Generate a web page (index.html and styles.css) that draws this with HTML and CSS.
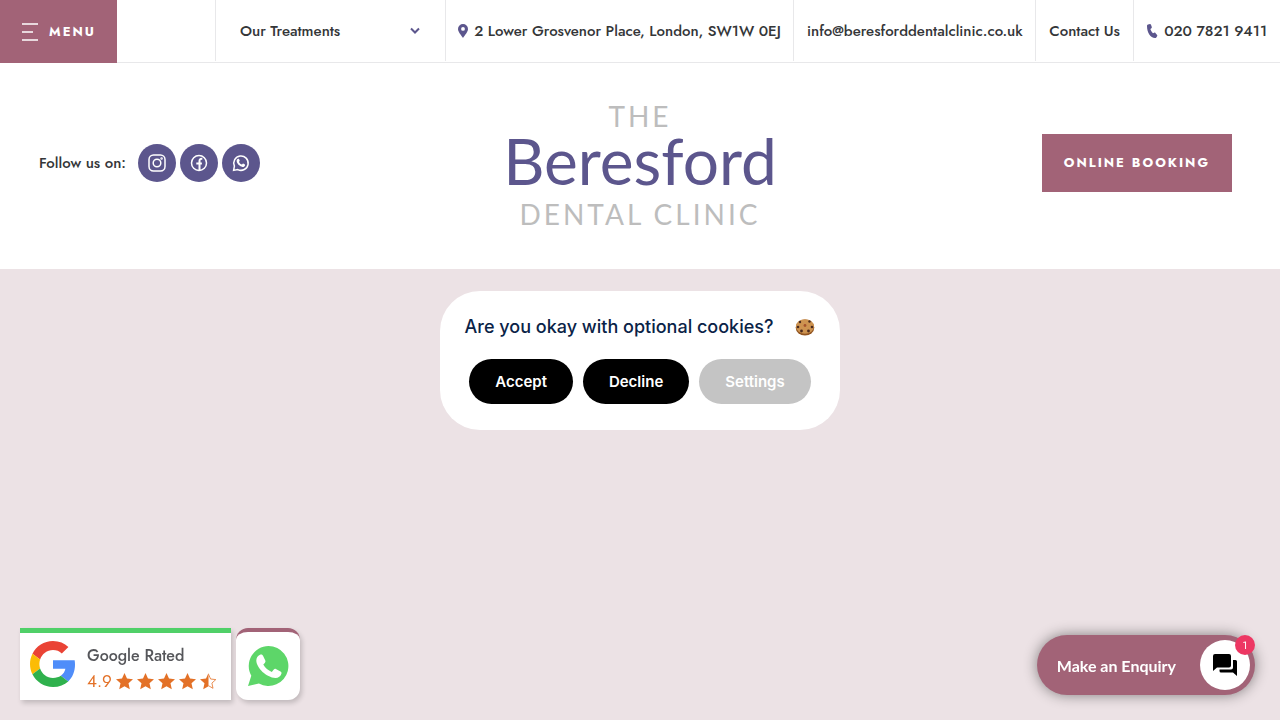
FILE: index.html
```html
<!DOCTYPE html>
<html lang="en">
<head>
    <meta charset="utf-8">
    <meta name="viewport" content="width=device-width, initial-scale=1">
    <title>The Beresford Dental Clinic</title>
    <link rel="stylesheet" href="styles.css">
</head>
<body>
    <nav class="topbar">
        <button class="menu-btn" type="button">
            <svg width="18" height="20" viewBox="0 0 18 20" stroke="#fff" stroke-width="1.6" aria-hidden="true">
                <path d="M1 2h16M1 10h11M1 18h16"/>
            </svg>
            Menu
        </button>
        <div class="topbar-item"></div>
        <div class="topbar-item treatments">
            <select aria-label="Our Treatments">
                <option>Our Treatments</option>
            </select>
            <svg class="chevron" width="12" height="8" viewBox="0 0 12 8" fill="none" stroke="#5c568d" stroke-width="2" aria-hidden="true">
                <path d="M2 1.5l4 4 4-4"/>
            </svg>
        </div>
        <a class="topbar-item" href="#map">
            <svg width="10" height="14" viewBox="0 0 10 14" fill="#5c568d" aria-hidden="true">
                <path fill-rule="evenodd" d="M5 0a5 5 0 0 1 5 5c0 3-3.500 6.500-5 9C3.500 11.500 0 8 0 5a5 5 0 0 1 5-5zm0 3a1.900 1.900 0 1 0 0 3.800A1.900 1.900 0 0 0 5 3z"/>
            </svg>
            2 Lower Grosvenor Place, London, SW1W 0EJ
        </a>
        <a class="topbar-item" href="mailto:info@beresforddentalclinic.co.uk">info@beresforddentalclinic.co.uk</a>
        <a class="topbar-item" href="#contact">Contact Us</a>
        <a class="topbar-item" href="tel:02078219411">
            <svg width="11" height="14" viewBox="0 0 11 14" fill="#5c568d" aria-hidden="true">
                <path d="M1 .5 3 0c.5 0 .8.200 1 .7l.8 2.400c.1.500 0 .9-.4 1.200l-1 .8c.5 1.700 1.300 3 2.600 4.100l1.200-.5c.5-.2.900-.1 1.200.3l1.700 1.900c.3.400.3.800.1 1.200l-.9 1.300c-.3.400-.7.600-1.300.6C3.500 13.800 0 8.500 0 2.200 0 1.300.3.700 1 .5z"/>
            </svg>
            020 7821 9411
        </a>
    </nav>

    <header class="masthead">
        <div class="social">
            <span class="social-label">Follow us on:</span>
            <a class="social-link" href="#instagram" aria-label="Instagram">
                <svg width="20" height="20" viewBox="0 0 20 20" fill="none" stroke="#fff" stroke-width="1.500">
                    <rect x="2" y="2" width="16" height="16" rx="4.500"/>
                    <circle cx="10" cy="10" r="3.800"/>
                    <circle cx="14.600" cy="5.400" r=".5"/>
                </svg>
            </a>
            <a class="social-link" href="#facebook" aria-label="Facebook">
                <svg width="20" height="20" viewBox="0 0 20 20" fill="none" stroke="#fff" stroke-width="1.500">
                    <circle cx="10" cy="10" r="7.500"/>
                    <path stroke-width="2" d="M10.500 17.500V8c0-1.600.8-2.300 2.800-2.100M7.300 10.500h5.600"/>
                </svg>
            </a>
            <a class="social-link" href="#whatsapp" aria-label="WhatsApp">
                <svg width="20" height="20" viewBox="0 0 20 20" fill="none" stroke="#fff" stroke-width="1.500">
                    <path d="M2.600 17.400l.8-4.300A7.200 7.200 0 1 1 6.800 16.600z"/>
                    <path fill="#fff" stroke="none" d="M7 5.800c.5-.2.900-.1 1.100.4l.6 1.400c.1.400-.5.900-.7 1.300.8 1.400 1.600 2.100 3 2.700.4-.3.800-1.100 1.200-1l1.700.9c.3.200.2.700 0 1.200-.5.900-1.500 1.400-2.500 1.200-2.500-.5-5.200-3-5.700-5.400-.2-1.100.2-2.300 1.300-2.700z"/>
                </svg>
            </a>
        </div>
        <a class="logo" href="#home">
            <span class="logo-small">THE</span>
            <span class="logo-name">Beresford</span>
            <span class="logo-small">DENTAL CLINIC</span>
        </a>
        <a class="booking-btn" href="#booking">Online Booking</a>
    </header>

    <main class="hero"></main>

    <div class="cookie-layer">
        <section class="cookie-box" role="dialog" aria-labelledby="cookie-title">
            <div class="cookie-head">
                <h2 id="cookie-title">Are you okay with optional cookies?</h2>
                <svg width="20" height="18" viewBox="0 0 20 18" aria-hidden="true">
                    <ellipse cx="10" cy="9.500" rx="9.300" ry="8" fill="#915420"/>
                    <ellipse cx="10" cy="8.500" rx="9" ry="7.300" fill="#cd9350"/>
                    <g fill="#4b2a1e">
                        <circle cx="5" cy="4" r="1.200"/><circle cx="14.500" cy="3.500" r="1.200"/>
                        <circle cx="3" cy="9" r="1.300"/><circle cx="17" cy="9" r="1.300"/>
                        <circle cx="6.500" cy="13" r="1.400"/><circle cx="13.500" cy="13" r="1.400"/>
                    </g>
                    <circle cx="10" cy="7.500" r="1.400" fill="#a4522e"/>
                </svg>
            </div>
            <div class="cookie-actions">
                <button type="button">Accept</button>
                <button type="button">Decline</button>
                <button type="button" class="muted">Settings</button>
            </div>
        </section>
    </div>

    <div class="badges">
        <a class="google-badge" href="#reviews">
            <svg class="google-logo" width="46" height="46" viewBox="0 0 48 48" aria-hidden="true">
                <path fill="#ea4335" d="M24 9.500c3.540 0 6.710 1.220 9.210 3.600l6.850-6.850C35.900 2.380 30.470 0 24 0 14.620 0 6.510 5.380 2.560 13.220l7.980 6.190C12.430 13.720 17.740 9.500 24 9.500z"/>
                <path fill="#4f8df9" d="M46.980 24.550c0-1.570-.15-3.090-.38-4.550H24v9.020h12.940c-.58 2.960-2.260 5.480-4.780 7.180l7.730 6c4.510-4.180 7.090-10.360 7.090-17.650z"/>
                <path fill="#fbbc05" d="M10.530 28.590c-.48-1.450-.76-2.990-.76-4.590s.27-3.140.76-4.590l-7.980-6.190C.92 16.460 0 20.120 0 24s.92 7.540 2.560 10.780z"/>
                <path fill="#2fb14d" d="M24 48c6.480 0 11.930-2.130 15.890-5.810l-7.730-6c-2.150 1.450-4.920 2.300-8.160 2.300-6.260 0-11.570-4.220-13.470-9.910l-7.980 6.190C6.510 42.620 14.620 48 24 48z"/>
            </svg>
            <div class="rating">
                <span class="rating-title">Google Rated</span>
                <span class="rating-row">
                    <span class="score">4.9</span>
                    <svg width="101" height="17" viewBox="0 0 101 17" fill="#e37127" aria-label="4.5 stars">
                        <defs>
                            <path id="star" d="M8.500 0l2.500 5.500 6 .7-4.500 4 1.300 6.100-5.300-3.100-5.300 3.100 1.300-6.100L0 6.200l6-.7z"/>
                        </defs>
                        <use href="#star"/>
                        <use href="#star" x="21"/>
                        <use href="#star" x="42"/>
                        <use href="#star" x="63"/>
                        <path d="M92.500 0v13.200l-5.300 3.100 1.300-6.100-4.500-4 6-.7z"/>
                        <path fill="none" stroke="#e37127" stroke-width=".8" d="M92.500 1.200l2.100 4.800 5.200.6-3.900 3.500 1.100 5.200-4.500-2.600"/>
                    </svg>
                </span>
            </div>
        </a>
        <a class="whatsapp-badge" href="#whatsapp" aria-label="WhatsApp chat">
            <svg width="42" height="42" viewBox="0 0 42 42" aria-hidden="true">
                <path fill="#5dd669" d="M21.500 1a20 20 0 1 1-9.600 37.600L1 41l3.300-10.200A20 20 0 0 1 21.500 1z"/>
                <path fill="#fff" d="M13 9.800c1-.6 2.300-.5 2.900.8l2.400 5c.4.900.1 1.700-.5 2.400l-1.500 1.600c2 3.500 4.800 5.900 8.500 7.400l2-2.500c.6-.7 1.300-.8 2.100-.4l4.600 2.300c1 .5 1.200 1.300.9 2.400-.7 2.600-3.300 4.300-6 4.200C19.500 32.500 9.500 23 9.300 15.500c0-2.500 1.400-4.500 3.700-5.700z"/>
            </svg>
        </a>
    </div>

    <button class="enquiry" type="button">
        <span class="enquiry-text">Make an Enquiry</span>
        <span class="enquiry-icon">
            <svg width="26" height="24" viewBox="0 0 26 24" aria-hidden="true">
                <path d="M3 1h14a2 2 0 0 1 2 2v9.500a2 2 0 0 1-2 2H5L1 18V3a2 2 0 0 1 2-2z"/>
                <path d="M21 7h2.500A1.500 1.500 0 0 1 25 8.500V23l-4-3.500H9A1.500 1.500 0 0 1 7.500 18v-1.500H19a2 2 0 0 0 2-2z"/>
            </svg>
        </span>
        <span class="enquiry-count">1</span>
    </button>
</body>
</html>
```

FILE: styles.css
```css
* {
    box-sizing: border-box;
}

body {
    margin: 0;
    min-height: 100vh;
    display: flex;
    flex-direction: column;
    font-family: Jost, Lato, sans-serif;
    font-size: 15px;
    font-weight: 500;
    color: #343638;
    background-color: #fff;
}

a {
    color: inherit;
    text-decoration: none;
}

button {
    border: none;
    cursor: pointer;
    font-family: inherit;
}

svg {
    flex-shrink: 0;
}

/* top bar */
.topbar {
    display: grid;
    grid-template-columns: 117px 99fr 230fr 349fr 242fr 98fr 146fr;
    height: 63px;
    box-shadow: inset 0 -1px #e8e8ea;
}

.menu-btn {
    display: flex;
    align-items: center;
    justify-content: center;
    gap: 10px;
    padding: 0;
    background-color: #a26377;
    color: #fff;
    font-size: 13px;
    font-weight: 700;
    letter-spacing: 2px;
    text-transform: uppercase;
}

.topbar-item {
    display: flex;
    align-items: center;
    justify-content: center;
    gap: 6px;
    margin-bottom: 2px;
    border-right: 1px solid #e8e8ea;
    white-space: nowrap;
}

.topbar-item:last-child {
    border-right: none;
}

.treatments {
    position: relative;
    padding: 0 24px;
}

.treatments select {
    width: 100%;
    height: 100%;
    padding: 0;
    border: none;
    appearance: none;
    background: none;
    font: inherit;
    color: inherit;
}

.chevron {
    position: absolute;
    right: 24px;
    pointer-events: none;
}

/* logo row */
.masthead {
    display: grid;
    grid-template-columns: 1fr auto 1fr;
    align-items: center;
    padding: 32px 39px 38px;
}

.social {
    display: flex;
    align-items: center;
    gap: 4px;
}

.social-label {
    margin-right: 8px;
}

.social-link {
    display: flex;
    align-items: center;
    justify-content: center;
    width: 38px;
    height: 38px;
    border-radius: 50%;
    background-color: #5c568d;
}

.logo {
    display: flex;
    flex-direction: column;
    align-items: center;
    padding-top: 4px;
    font-family: Lato, sans-serif;
    font-weight: 400;
    color: #5c568d;
}

.logo-small {
    font-size: 28px;
    line-height: 34px;
    letter-spacing: 3px;
    color: #bdbdbd;
}

.logo-name {
    margin-bottom: 8px;
    font-size: 64px;
    line-height: 56px;
}

.booking-btn {
    justify-self: end;
    margin-right: 9px;
    padding: 0 22px;
    background-color: #a26377;
    color: #fff;
    font-size: 13px;
    font-weight: 700;
    line-height: 58px;
    letter-spacing: 2px;
    text-transform: uppercase;
}

.hero {
    flex: 1;
    background-color: #ece2e5;
}

/* cookie dialog */
.cookie-layer {
    position: fixed;
    inset: 0;
    display: grid;
    place-items: center;
    pointer-events: none;
}

.cookie-box {
    padding: 24px 25px 26px;
    border-radius: 40px;
    background-color: #fff;
    font-family: Inter, sans-serif;
    pointer-events: auto;
}

.cookie-head {
    display: flex;
    align-items: center;
    justify-content: space-between;
    gap: 22px;
}

.cookie-head h2 {
    margin: 0;
    font-size: 18px;
    font-weight: 500;
    line-height: 24px;
    color: #0a2347;
}

.cookie-actions {
    display: flex;
    justify-content: center;
    gap: 10px;
    margin-top: 20px;
}

.cookie-actions button {
    padding: 0 26px;
    border-radius: 23px;
    background-color: #000;
    color: #fff;
    font-size: 15px;
    font-weight: 600;
    line-height: 45px;
}

.cookie-actions .muted {
    background-color: #c4c4c4;
}

/* floating badges */
.badges {
    position: fixed;
    left: 20px;
    bottom: 20px;
    display: flex;
    gap: 5px;
}

.google-badge {
    display: flex;
    align-items: center;
    gap: 11px;
    padding: 0 14px 0 10px;
    height: 72px;
    border-top: 5px solid #50d068;
    background-color: #fff;
    box-shadow: 2px 3px 5px rgba(0,0,0,0.18);
}

.google-logo {
    align-self: flex-start;
    margin-top: 8px;
}

.rating {
    display: flex;
    flex-direction: column;
    gap: 2px;
    padding-top: 5px;
}

.rating-title {
    font-size: 16px;
    line-height: 22px;
    color: #55565a;
}

.rating-row {
    display: flex;
    align-items: center;
    gap: 4px;
}

.score {
    font-size: 17px;
    font-weight: 400;
    line-height: 24px;
    color: #e37127;
}

.whatsapp-badge {
    display: flex;
    align-items: center;
    justify-content: center;
    width: 64px;
    height: 72px;
    border-top: 4px solid #a26377;
    border-radius: 12px;
    background-color: #fff;
    box-shadow: 2px 3px 5px rgba(0,0,0,0.18);
}

.enquiry {
    position: fixed;
    right: 25px;
    bottom: 25px;
    display: flex;
    align-items: center;
    gap: 24px;
    padding: 5px 5px 5px 20px;
    border-radius: 30px;
    background-color: #a26377;
    color: #fff;
    box-shadow: 0 0 14px rgba(0,0,0,0.45);
}

.enquiry-text {
    font-family: "Proxima Nova", Lato, sans-serif;
    font-size: 16px;
    font-weight: 700;
}

.enquiry-icon {
    display: flex;
    align-items: center;
    justify-content: center;
    width: 50px;
    height: 50px;
    border-radius: 50%;
    background-color: #fff;
}

.enquiry-count {
    position: absolute;
    top: 0;
    right: 0;
    width: 20px;
    border-radius: 10px;
    background-color: #ed3763;
    font-size: 11px;
    line-height: 20px;
}
```
